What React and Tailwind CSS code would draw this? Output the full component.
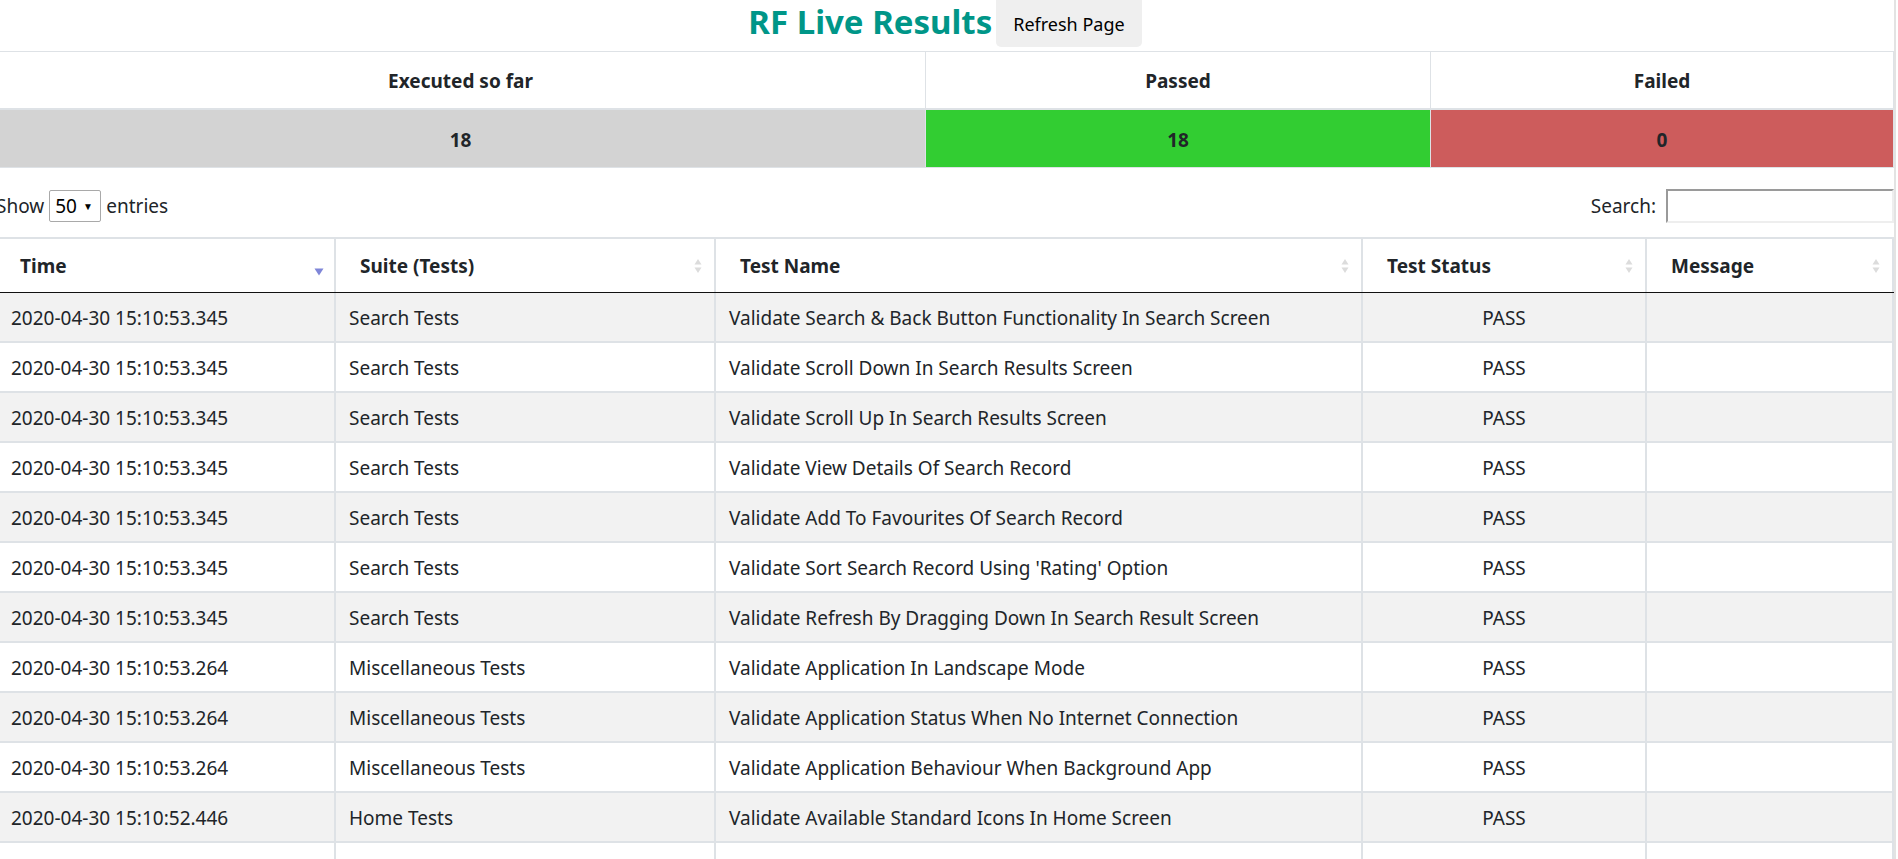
import React from 'react'

const rows = [
  ['2020-04-30 15:10:53.345', 'Search Tests', 'Validate Search & Back Button Functionality In Search Screen'],
  ['2020-04-30 15:10:53.345', 'Search Tests', 'Validate Scroll Down In Search Results Screen'],
  ['2020-04-30 15:10:53.345', 'Search Tests', 'Validate Scroll Up In Search Results Screen'],
  ['2020-04-30 15:10:53.345', 'Search Tests', 'Validate View Details Of Search Record'],
  ['2020-04-30 15:10:53.345', 'Search Tests', 'Validate Add To Favourites Of Search Record'],
  ['2020-04-30 15:10:53.345', 'Search Tests', "Validate Sort Search Record Using 'Rating' Option"],
  ['2020-04-30 15:10:53.345', 'Search Tests', 'Validate Refresh By Dragging Down In Search Result Screen'],
  ['2020-04-30 15:10:53.264', 'Miscellaneous Tests', 'Validate Application In Landscape Mode'],
  ['2020-04-30 15:10:53.264', 'Miscellaneous Tests', 'Validate Application Status When No Internet Connection'],
  ['2020-04-30 15:10:53.264', 'Miscellaneous Tests', 'Validate Application Behaviour When Background App'],
  ['2020-04-30 15:10:52.446', 'Home Tests', 'Validate Available Standard Icons In Home Screen'],
  null,
]

const cols = 'grid grid-cols-[340px_380px_647px_284px_247px]'

function SortBoth() {
  return (
    <svg width="8" height="16" viewBox="0 0 8 16" className="absolute right-[12px] top-1/2 -translate-y-1/2">
      <path d="M4 1 L7.5 6.5 H0.5 Z" fill="#dcdcdc" />
      <path d="M4 15 L7.5 9.5 H0.5 Z" fill="#dcdcdc" />
    </svg>
  )
}

function SortDesc() {
  return (
    <svg width="10" height="8" viewBox="0 0 10 8" className="absolute right-[10px] top-[29px]">
      <path d="M0.5 0.5 H9.5 L5 7.5 Z" fill="#7f86d8" />
    </svg>
  )
}

function Th({ children, sort }) {
  return (
    <div className="relative flex items-center pl-[24px] pt-[2px] font-bold text-[#212529] border-r-2 border-[#dee2e6]">
      {children}
      {sort === 'desc' ? <SortDesc /> : <SortBoth />}
    </div>
  )
}

export default function App() {
  return (
    <div className="w-[1898px] h-[859px] overflow-hidden bg-white text-[19px] text-[#212529] font-['Segoe_UI','Noto_Sans',sans-serif]">
      <div className="ml-[-4px] w-[1900px] border-r-2 border-[#e3e3e3]">
        <div className="h-[51px] flex justify-center items-start gap-[4px]">
          <h1 className="mt-[2px] text-[33px] leading-[40px] font-bold text-[#009688]">RF Live Results</h1>
          <button className="h-[47px] px-[17px] pt-[2px] bg-[#efefef] rounded-b-[5px] text-[18px] text-black">Refresh Page</button>
        </div>

        <div className="border-t border-b border-[#dee2e6]">
          <div className="grid grid-cols-[930px_505px_463px] h-[58px] font-bold text-center border-b-2 border-[#dee2e6]">
            <div className="flex items-center justify-center pt-[3px] border-r border-[#dee2e6]">Executed so far</div>
            <div className="flex items-center justify-center pt-[3px] border-r border-[#dee2e6]">Passed</div>
            <div className="flex items-center justify-center pt-[3px] border-r border-[#dee2e6]">Failed</div>
          </div>
          <div className="grid grid-cols-[930px_505px_463px] h-[57px] font-bold text-center">
            <div className="flex items-center justify-center pt-[3px] bg-[#d3d3d3] border-r border-[#dee2e6]">18</div>
            <div className="flex items-center justify-center pt-[3px] bg-[#32cd32] border-r border-[#dee2e6]">18</div>
            <div className="flex items-center justify-center pt-[3px] bg-[#cd5c5c] border-r border-[#dee2e6]">0</div>
          </div>
        </div>

        <div className="mt-[20px] h-[36px] flex items-center justify-between">
          <div className="flex items-center gap-[5px]">
            <span>Show</span>
            <span className="h-[32px] w-[52px] border border-[#a9a9a9] rounded-[2px] flex items-center pl-[5px] gap-[6px] text-black">
              50<span className="text-[10px]">▼</span>
            </span>
            <span>entries</span>
          </div>
          <div className="flex items-center gap-[10px]">
            <span>Search:</span>
            <span className="block h-[34px] w-[228px] border-2 border-t-[#9a9a9a] border-l-[#9a9a9a] border-r-[#eeeeee] border-b-[#eeeeee] bg-white"></span>
          </div>
        </div>

        <div className="mt-[13px] border-t-2 border-[#dee2e6]">
          <div className={`${cols} h-[54px] border-b border-[#111]`}>
            <Th sort="desc">Time</Th>
            <Th>Suite (Tests)</Th>
            <Th>Test Name</Th>
            <Th>Test Status</Th>
            <Th>Message</Th>
          </div>
          {rows.map((r, i) => (
            <div key={i} className={`${cols} h-[50px] border-b-2 border-[#dee2e6] ${i % 2 === 0 ? 'bg-[#f2f2f2]' : 'bg-white'}`}>
              <div className="flex items-center pl-[15px] pt-[3px] border-r-2 border-[#dee2e6]">{r && r[0]}</div>
              <div className="flex items-center pl-[13px] pt-[3px] border-r-2 border-[#dee2e6]">{r && r[1]}</div>
              <div className="flex items-center pl-[13px] pt-[3px] border-r-2 border-[#dee2e6]">{r && r[2]}</div>
              <div className="flex items-center justify-center pt-[3px] border-r-2 border-[#dee2e6]">{r && 'PASS'}</div>
              <div className="border-r-2 border-[#dee2e6]"></div>
            </div>
          ))}
        </div>
      </div>
    </div>
  )
}
